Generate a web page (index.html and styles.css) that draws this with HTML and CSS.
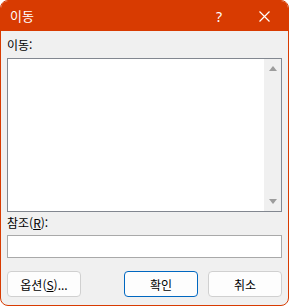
FILE: index.html
```html
<!DOCTYPE html>
<html lang="ko">
<head>
<meta charset="UTF-8" />
<meta name="viewport" content="width=device-width, initial-scale=1" />
<title>이동</title>
<link rel="stylesheet" href="styles.css">
</head>
<body>
<div class="dialog">
  <div class="titlebar">
    <span class="title">이동</span>
    <span class="help">?</span>
    <span class="close">
      <svg width="11" height="11" viewBox="0 0 11 11"><path d="M0.5 0.5 L10.5 10.5 M10.5 0.5 L0.5 10.5" stroke="#fff" stroke-width="1.2" fill="none"/></svg>
    </span>
  </div>

  <div class="body">
    <label class="label goto-label">이동:</label>
    <div class="listbox">
      <div class="list-items"></div>
      <div class="scrollbar">
        <span class="arrow up"></span>
        <span class="arrow down"></span>
      </div>
    </div>

    <label class="label ref-label" for="refInput">참조(<u>R</u>):</label>
    <input type="text" id="refInput" class="ref-input" />

    <div class="buttons">
      <button class="btn">옵션(<u>S</u>)...</button>
      <div class="spacer"></div>
      <button class="btn primary">확인</button>
      <button class="btn">취소</button>
    </div>
  </div>
</div>
</body>
</html>
```

FILE: styles.css
```css
* { box-sizing: border-box; }
body {
  margin: 0;
  font-family: "Noto Sans CJK KR", "Noto Sans", sans-serif;
  font-size: 12px;
  color: #000;
  background: #fff;
}
.dialog {
  width: 289px;
  height: 306px;
  border: 1px solid #d83b01;
  border-radius: 8px;
  background: #f0f0f0;
  overflow: hidden;
}
.titlebar {
  height: 30px;
  background: #d83b01;
  color: #fff;
  display: flex;
  align-items: center;
  padding-left: 9px;
}
.title {
  flex: 1;
  font-size: 13px;
  line-height: 16px;
}
.help {
  width: 46px;
  text-align: center;
  font-family: "Noto Sans", sans-serif;
  font-size: 14px;
}
.close {
  width: 46px;
  display: flex;
  justify-content: center;
  align-items: center;
  padding-right: 1px;
}
.body {
  padding: 0 6px;
}
.label {
  display: block;
  line-height: 16px;
}
.goto-label {
  margin-top: 6px;
}
.listbox {
  margin-top: 5px;
  height: 154px;
  border: 1px solid #828790;
  background: #fff;
  display: flex;
}
.list-items { flex: 1; }
.scrollbar {
  width: 17px;
  background: #f0f0f0;
  display: flex;
  flex-direction: column;
  justify-content: space-between;
  align-items: center;
  padding: 7px 0 7px;
}
.arrow {
  width: 0;
  height: 0;
  border-left: 4.5px solid transparent;
  border-right: 4.5px solid transparent;
}
.arrow.up { border-bottom: 5px solid #9c9c9c; }
.arrow.down { border-top: 5px solid #9c9c9c; }
.ref-label {
  margin-top: 3px;
}
.ref-label u { text-underline-offset: 1px; }
.ref-input {
  display: block;
  width: 100%;
  height: 23px;
  margin-top: 4px;
  border: 1px solid #a9a9a9;
  background: #fff;
  outline: none;
}
.buttons {
  display: flex;
  margin-top: 13px;
  gap: 10px;
}
.spacer { flex: 1; }
.btn {
  width: 74px;
  height: 26px;
  font-family: inherit;
  font-size: 12px;
  background: #fdfdfd;
  border: 1px solid #d0d0d0;
  border-radius: 4px;
  padding: 0;
  color: #000;
}
.btn.primary {
  border-color: #0067c0;
}
```
